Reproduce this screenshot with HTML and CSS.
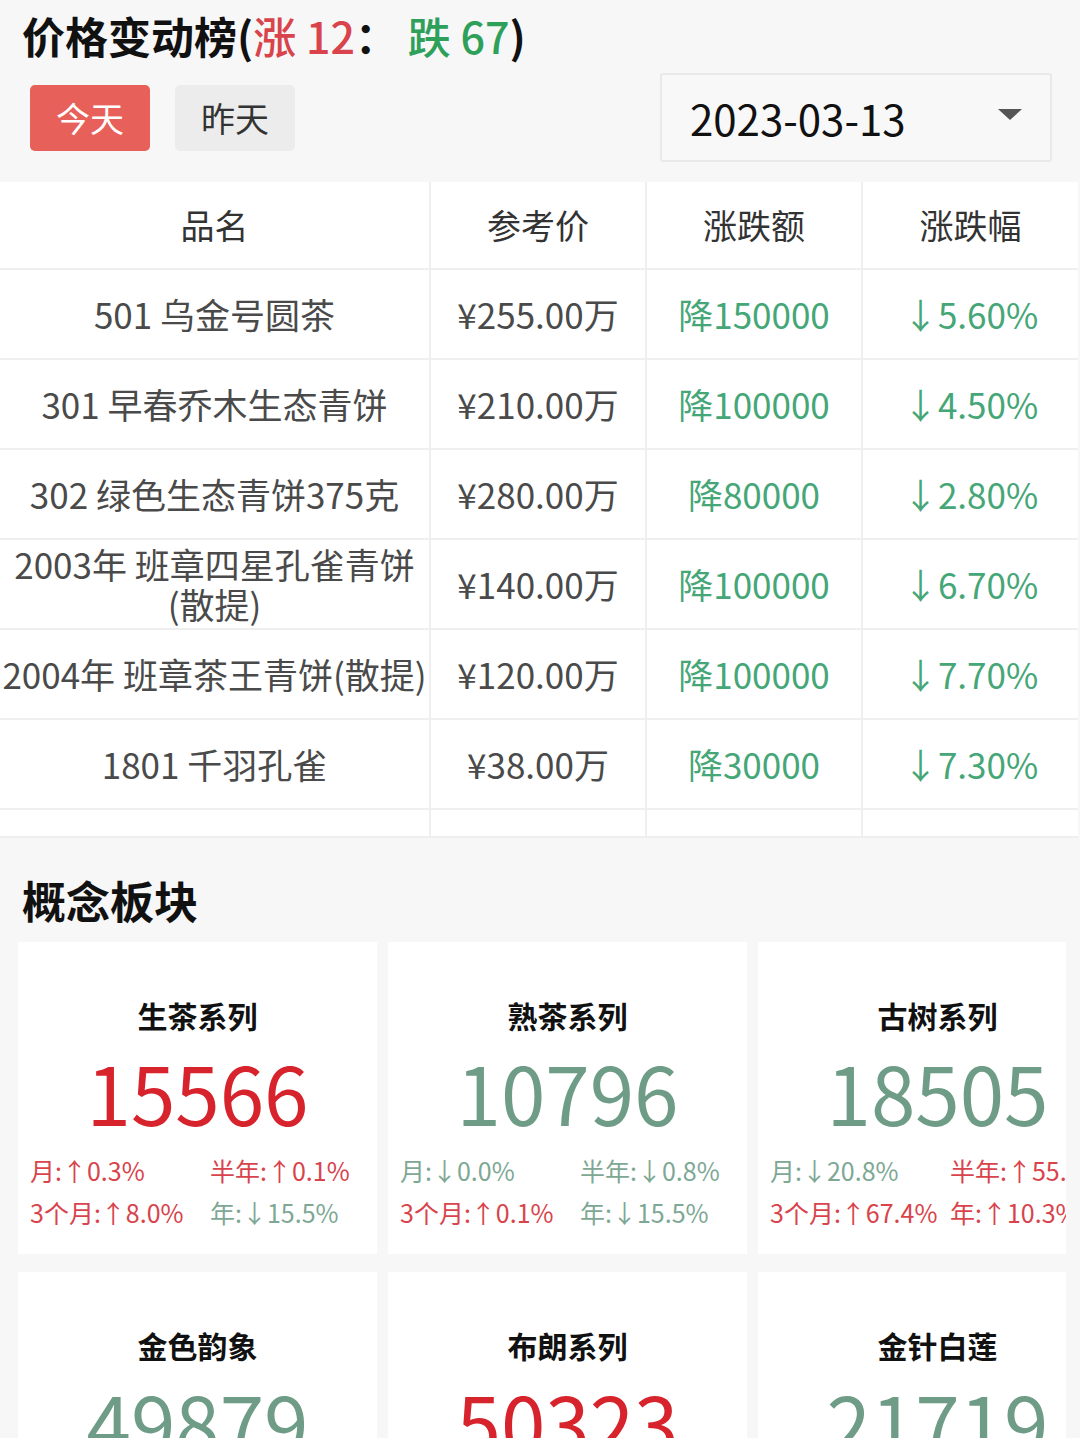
FILE: index.html
```html
<!DOCTYPE html>
<html lang="zh-CN">
<head>
<meta charset="utf-8">
<title>价格变动榜</title>
<link rel="stylesheet" href="styles.css">
</head>
<body>
<div class="page">
  <h1 class="title">价格变动榜(<span class="up">涨 12</span>： <span class="down">跌 67</span>)</h1>
  <div class="controls">
    <div class="tabs">
      <button class="tab active">今天</button>
      <button class="tab">昨天</button>
    </div>
    <div class="select">
      <span class="select-value">2023-03-13</span>
      <span class="caret"></span>
    </div>
  </div>

  <table class="rank">
    <colgroup>
      <col class="c-name"><col class="c-num"><col class="c-num"><col class="c-num">
    </colgroup>
    <thead>
      <tr><th>品名</th><th>参考价</th><th>涨跌额</th><th>涨跌幅</th></tr>
    </thead>
    <tbody>
      <tr><td class="name">501 乌金号圆茶</td><td>¥255.00万</td><td class="g">降150000</td><td class="g">↓5.60%</td></tr>
      <tr><td class="name">301 早春乔木生态青饼</td><td>¥210.00万</td><td class="g">降100000</td><td class="g">↓4.50%</td></tr>
      <tr><td class="name">302 绿色生态青饼375克</td><td>¥280.00万</td><td class="g">降80000</td><td class="g">↓2.80%</td></tr>
      <tr><td class="name wrap">2003年 班章四星孔雀青饼(散提)</td><td>¥140.00万</td><td class="g">降100000</td><td class="g">↓6.70%</td></tr>
      <tr><td class="name">2004年 班章茶王青饼(散提)</td><td>¥120.00万</td><td class="g">降100000</td><td class="g">↓7.70%</td></tr>
      <tr><td class="name">1801 千羽孔雀</td><td>¥38.00万</td><td class="g">降30000</td><td class="g">↓7.30%</td></tr>
      <tr class="empty"><td></td><td></td><td></td><td></td></tr>
    </tbody>
  </table>

  <h2 class="section-title">概念板块</h2>
  <div class="cards-wrap">
    <div class="cards">
      <div class="card">
        <div class="card-title">生茶系列</div>
        <div class="card-num red">15566</div>
        <div class="stats">
          <span class="r">月:↑0.3%</span><span class="r">半年:↑0.1%</span>
          <span class="r">3个月:↑8.0%</span><span class="gr">年:↓15.5%</span>
        </div>
      </div>
      <div class="card">
        <div class="card-title">熟茶系列</div>
        <div class="card-num green">10796</div>
        <div class="stats">
          <span class="gr">月:↓0.0%</span><span class="gr">半年:↓0.8%</span>
          <span class="r">3个月:↑0.1%</span><span class="gr">年:↓15.5%</span>
        </div>
      </div>
      <div class="card">
        <div class="card-title">古树系列</div>
        <div class="card-num green">18505</div>
        <div class="stats">
          <span class="gr">月:↓20.8%</span><span class="r">半年:↑55.6%</span>
          <span class="r">3个月:↑67.4%</span><span class="r">年:↑10.3%</span>
        </div>
      </div>
      <div class="card">
        <div class="card-title">金色韵象</div>
        <div class="card-num green">49879</div>
        <div class="stats">
          <span class="gr">月:↓0.5%</span><span class="gr">半年:↓2.1%</span>
          <span class="r">3个月:↑1.2%</span><span class="gr">年:↓8.4%</span>
        </div>
      </div>
      <div class="card">
        <div class="card-title">布朗系列</div>
        <div class="card-num red">50323</div>
        <div class="stats">
          <span class="r">月:↑1.1%</span><span class="r">半年:↑3.2%</span>
          <span class="r">3个月:↑2.4%</span><span class="gr">年:↓4.6%</span>
        </div>
      </div>
      <div class="card">
        <div class="card-title">金针白莲</div>
        <div class="card-num green">21719</div>
        <div class="stats">
          <span class="gr">月:↓1.3%</span><span class="gr">半年:↓0.9%</span>
          <span class="r">3个月:↑0.4%</span><span class="gr">年:↓6.2%</span>
        </div>
      </div>
    </div>
  </div>
</div>
</body>
</html>
```

FILE: styles.css
```css
* { box-sizing: border-box; }

html, body {
  margin: 0;
  padding: 0;
  background: #f7f7f7;
  font-family: "Noto Sans CJK SC", "Noto Sans", sans-serif;
  color: #333;
}

.page {
  width: 1080px;
  overflow: hidden;
}

.title {
  margin: 0;
  padding: 3px 22px 0;
  font-size: 43px;
  line-height: 64px;
  font-weight: 700;
  color: #111;
  white-space: nowrap;
}

.title .up,
.title .down { font-weight: 500; }
.title .up { color: #d9434b; }
.title .down { color: #2ea05a; }

.controls {
  display: flex;
  align-items: center;
  justify-content: space-between;
  margin-top: 6px;
  padding: 0 28px 0 30px;
}

.tabs {
  display: flex;
  gap: 25px;
}

.tab {
  width: 120px;
  height: 66px;
  border: none;
  border-radius: 5px;
  background: #ececec;
  color: #333;
  font-family: inherit;
  font-size: 34px;
  line-height: 66px;
  padding: 0;
}

.tab.active {
  background: #e8605a;
  color: #fff;
}

.select {
  width: 392px;
  height: 89px;
  border: 2px solid #e9e9e9;
  border-radius: 3px;
  background: #f8f8f8;
  display: flex;
  align-items: center;
  justify-content: space-between;
  padding: 0 28px 0 28px;
}

.select-value {
  font-size: 42px;
  color: #111;
  line-height: 1;
}

.caret {
  width: 0;
  height: 0;
  border-left: 12px solid transparent;
  border-right: 12px solid transparent;
  border-top: 11px solid #555;
  margin-top: -6px;
}

.rank {
  margin-top: 20px;
  width: 1078px;
  table-layout: fixed;
  border-collapse: collapse;
  background: #fff;
}

.c-name { width: 430px; }
.c-num { width: 216px; }

.rank th,
.rank td {
  border-right: 2px solid #efefef;
  border-bottom: 2px solid #efefef;
  text-align: center;
  padding: 0;
  font-size: 35px;
  line-height: 40px;
}

.rank th:last-child,
.rank td:last-child { border-right: none; }

.rank th {
  height: 87px;
  font-weight: 400;
  color: #333;
  font-size: 34px;
}

.rank td {
  height: 90px;
  color: #4a4a4a;
}

.rank td.name {
  white-space: nowrap;
}

.rank td.name.wrap {
  white-space: normal;
  padding: 0 6px;
}

.rank td.g { color: #45a677; }

.rank tr.empty td { height: 28px; }

.section-title {
  margin: 30px 0 0;
  padding: 0 22px;
  font-size: 44px;
  line-height: 64px;
  font-weight: 700;
  color: #111;
}

.cards-wrap {
  margin: 10px 0 0 18px;
  width: 1048px;
  overflow: hidden;
}

.cards {
  display: grid;
  grid-template-columns: repeat(3, 359px);
  column-gap: 11px;
  row-gap: 18px;
}

.card {
  background: #fff;
  height: 312px;
  padding-top: 53px;
  overflow: hidden;
}

.card-title {
  text-align: center;
  font-size: 30px;
  line-height: 40px;
  font-weight: 700;
  color: #111;
}

.card-num {
  text-align: center;
  font-size: 80px;
  line-height: 90px;
  margin-top: 11px;
}

.card-num.red { color: #d7232c; }
.card-num.green { color: #6f9c87; }

.stats {
  display: grid;
  grid-template-columns: 180px auto;
  padding-left: 12px;
  margin-top: 13px;
  font-size: 25px;
  line-height: 42px;
  white-space: nowrap;
}

.stats .r { color: #d8434c; }
.stats .gr { color: #7ea794; }
```
